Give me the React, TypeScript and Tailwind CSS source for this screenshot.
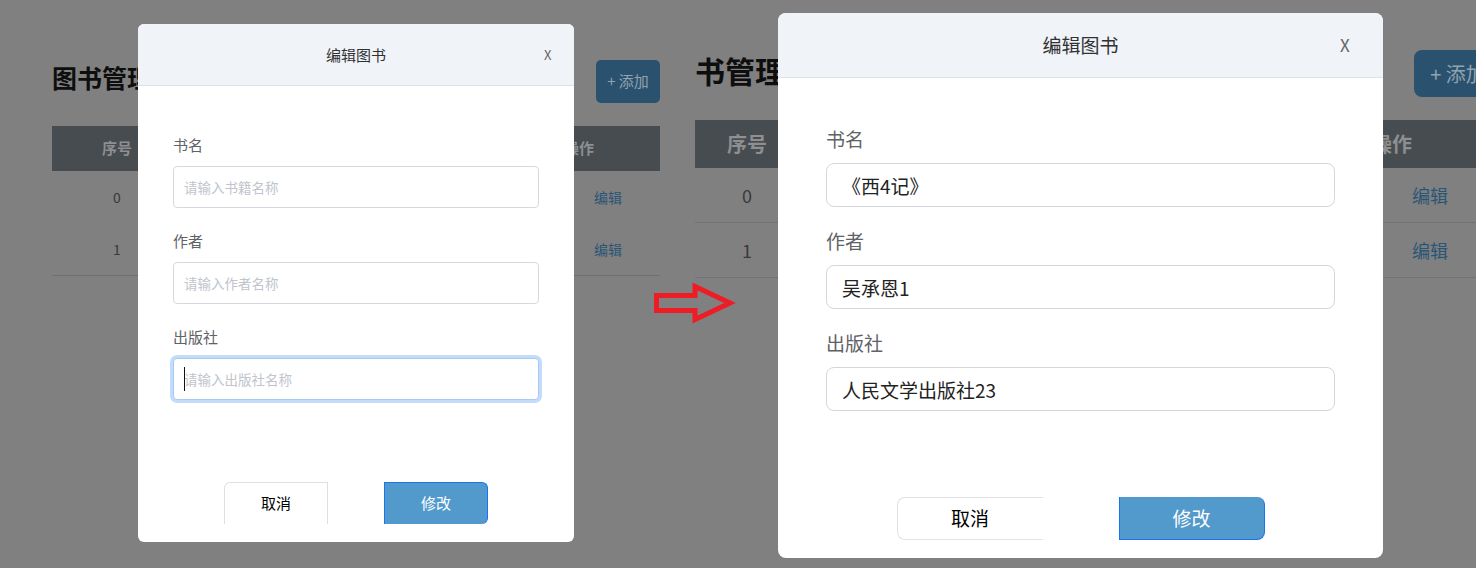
import React from 'react'

// Two screenshots of the same "编辑图书" dialog, before and after editing
type Field = { label: string; placeholder: string; value?: string; focused?: boolean }

const emptyFields: Field[] = [
  { label: '书名', placeholder: '请输入书籍名称' },
  { label: '作者', placeholder: '请输入作者名称' },
  { label: '出版社', placeholder: '请输入出版社名称', focused: true },
]

const filledFields: Field[] = [
  { label: '书名', placeholder: '请输入书籍名称', value: '《西4记》' },
  { label: '作者', placeholder: '请输入作者名称', value: '吴承恩1' },
  { label: '出版社', placeholder: '请输入出版社名称', value: '人民文学出版社23' },
]

function SmallDialog() {
  return (
    <div className="absolute left-[138px] top-[24px] w-[436px] h-[518px] bg-white rounded-[6px] overflow-hidden flex flex-col">
      {/* Header */}
      <div className="h-[62px] shrink-0 bg-[#f0f3f8] border-b border-[#dde1e7] flex items-center px-[21px]">
        <span className="w-[9px]" />
        <span className="flex-1 text-center text-[15px] leading-[20px] text-[#303133]">编辑图书</span>
        <span className="w-[9px] text-[13px] leading-[16px] text-[#666]">X</span>
      </div>

      {/* Form */}
      <div className="px-[35px] pt-[49px]">
        {emptyFields.map((f) => (
          <div key={f.label} className="mb-[23px]">
            <label className="block h-[20px] leading-[20px] text-[15px] text-[#606266] mb-[11px]">{f.label}</label>
            <div className="relative">
              <input
                readOnly
                placeholder={f.placeholder}
                className={`block w-full h-[42px] px-[10px] rounded-[4px] border bg-white text-[13.5px] outline-none placeholder:text-[#c0c4cc] ${
                  f.focused ? 'border-[#a9c9f5] ring-[3px] ring-[#c4dcfb]' : 'border-[#d5d8de]'
                }`}
              />
              {f.focused && <span className="absolute left-[11px] top-[9px] w-px h-[24px] bg-[#111]" />}
            </div>
          </div>
        ))}
      </div>

      {/* Footer */}
      <div className="mt-auto pb-[18px] flex justify-center gap-[56px]">
        <button className="w-[104px] h-[42px] bg-white border border-b-0 border-[#dcdfe6] rounded-tl-[6px] text-[15px] text-black">
          取消
        </button>
        <button className="w-[104px] h-[42px] bg-[#5299cc] border border-b-0 border-[#1a73f0] rounded-r-[6px] text-[15px] text-white">
          修改
        </button>
      </div>
    </div>
  )
}

function LargeDialog() {
  return (
    <div className="absolute left-[98px] top-[13px] w-[605px] h-[545px] bg-white rounded-[8px] overflow-hidden flex flex-col">
      {/* Header */}
      <div className="h-[65px] shrink-0 bg-[#f0f3f8] border-b border-[#dde1e7] flex items-center px-[29px]">
        <span className="w-[14px]" />
        <span className="flex-1 text-center text-[19px] leading-[26px] text-[#303133]">编辑图书</span>
        <span className="w-[14px] text-[17px] leading-[20px] text-[#666]">X</span>
      </div>

      {/* Form */}
      <div className="px-[48px] pt-[48px]">
        {filledFields.map((f) => (
          <div key={f.label} className="mb-[21px]">
            <label className="block h-[26px] leading-[26px] text-[19px] text-[#606266] mb-[11px]">{f.label}</label>
            <input
              readOnly
              value={f.value}
              placeholder={f.placeholder}
              className="block w-full h-[44px] px-[15px] rounded-[8px] border border-[#d3d6dc] bg-white text-[19px] text-[#222] outline-none"
            />
          </div>
        ))}
      </div>

      {/* Footer */}
      <div className="mt-auto pb-[18px] flex justify-center gap-[76px]">
        <button className="w-[146px] h-[43px] bg-white border border-r-0 border-[#e0e2e6] rounded-l-[8px] text-[19px] text-black">
          取消
        </button>
        <button className="w-[146px] h-[43px] bg-[#5299cc] border border-t-0 border-[#1a73f0] rounded-r-[8px] text-[19px] text-white">
          修改
        </button>
      </div>
    </div>
  )
}

export default function App() {
  return (
    <div className="relative w-[1476px] h-[568px] bg-[#808080] overflow-hidden flex font-['Noto_Sans_CJK_SC','Noto_Sans',sans-serif]">
      {/* Left shot: empty form */}
      <div className="relative w-[680px] h-full shrink-0">
        <div className="w-[608px] ml-[52px] pt-[60px]">
          <div className="flex items-start justify-between h-[43px]">
            <h1 className="text-[25px] leading-[34px] font-bold text-[#0e0e0e]">图书管理</h1>
            <button className="w-[64px] h-[43px] rounded-[5px] bg-[#2a526f] text-[15px] text-[#93a2ae]">+ 添加</button>
          </div>
          <div className="mt-[23px]">
            <div className="flex h-[45px] items-center bg-[#474c51] text-[15px] font-semibold text-[#8d8f91]">
              <div className="w-[130px] text-center">序号</div>
              <div className="flex-1" />
              <div className="w-[104px] text-center pr-[58px]">操作</div>
            </div>
            {['0', '1'].map((n, i) => (
              <div key={n} className={`flex items-center text-[14px] ${i === 1 ? 'h-[53px] border-b border-[#6f6f6f]' : 'h-[52px]'}`}>
                <div className="w-[130px] text-center text-[#3a3a3a]">{n}</div>
                <div className="flex-1" />
                <div className="w-[104px] text-center text-[#2a5676]">编辑</div>
              </div>
            ))}
          </div>
        </div>
        <SmallDialog />
      </div>

      {/* Right shot: filled form */}
      <div className="relative flex-1 h-full">
        <div className="w-[807px] ml-[15px] pt-[50px]">
          <div className="flex items-start justify-between h-[47px]">
            <h1 className="text-[30px] leading-[40px] font-bold text-[#0e0e0e]">书管理</h1>
            <button className="w-[88px] h-[47px] rounded-[8px] bg-[#2a526f] text-[20px] text-[#93a2ae]">+ 添加</button>
          </div>
          <div className="mt-[23px]">
            <div className="flex h-[48px] items-center bg-[#474c51] text-[20px] font-semibold text-[#8d8f91]">
              <div className="w-[104px] text-center">序号</div>
              <div className="flex-1" />
              <div className="w-[144px] text-center pr-[76px]">操作</div>
            </div>
            {['0', '1'].map((n) => (
              <div key={n} className="flex h-[55px] items-center border-b border-[#727272] text-[18px]">
                <div className="w-[104px] text-center text-[#3a3a3a]">{n}</div>
                <div className="flex-1" />
                <div className="w-[144px] text-center text-[#2a5676]">编辑</div>
              </div>
            ))}
          </div>
        </div>
        <LargeDialog />
      </div>

      {/* Red arrow between the two shots */}
      <svg className="absolute left-[652px] top-[282px]" width="84" height="44" viewBox="0 0 84 44">
        <polygon
          points="4.5,13.5 43,13.5 43,4.5 78,21 43,37.5 43,28.5 4.5,28.5"
          fill="none"
          stroke="#ee1c25"
          strokeWidth="5"
        />
      </svg>
    </div>
  )
}
